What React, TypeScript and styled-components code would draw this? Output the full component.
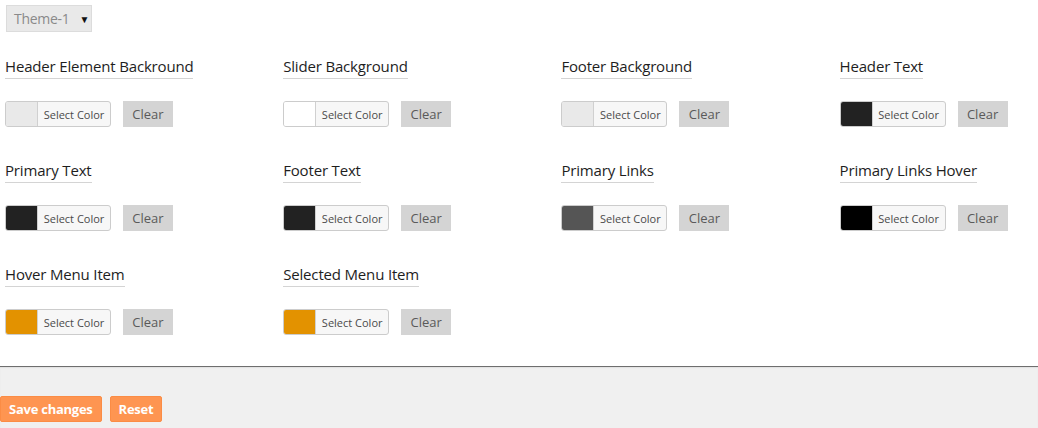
import React from 'react';
import styled, { createGlobalStyle } from 'styled-components';

const GlobalStyle = createGlobalStyle`
  html, body {
    margin: 0;
    padding: 0;
    background: #ffffff;
    font-family: "Open Sans", "Noto Sans", Arial, sans-serif;
  }
`;

type Field = { label: string; color: string };

const fields: Field[] = [
  { label: 'Header Element Backround', color: '#e9e9e9' },
  { label: 'Slider Background', color: '#ffffff' },
  { label: 'Footer Background', color: '#e9e9e9' },
  { label: 'Header Text', color: '#222222' },
  { label: 'Primary Text', color: '#222222' },
  { label: 'Footer Text', color: '#222222' },
  { label: 'Primary Links', color: '#555555' },
  { label: 'Primary Links Hover', color: '#000000' },
  { label: 'Hover Menu Item', color: '#e39200' },
  { label: 'Selected Menu Item', color: '#e39200' },
];

const App: React.FC = () => (
  <>
    <GlobalStyle />
    <Page>
      <ThemeSelect>
        <span>Theme-1</span>
        <Arrow>▼</Arrow>
      </ThemeSelect>
      <Grid>
        {fields.map((f) => (
          <Cell key={f.label}>
            <Label>{f.label}</Label>
            <Controls>
              <Picker>
                <Swatch $color={f.color} />
                <PickerText>Select Color</PickerText>
              </Picker>
              <ClearButton>Clear</ClearButton>
            </Controls>
          </Cell>
        ))}
      </Grid>
    </Page>
    <Footer>
      <OrangeButton>Save changes</OrangeButton>
      <OrangeButton>Reset</OrangeButton>
    </Footer>
  </>
);

const Page = styled.div`
  padding: 5px 5px 31px 5px;
  border-bottom: 1px solid #6e6e6e;
  overflow: hidden;
`;

const ThemeSelect = styled.div`
  display: flex;
  align-items: center;
  box-sizing: border-box;
  margin-left: 1px;
  width: 86px;
  height: 27px;
  padding: 0 0 0 7px;
  background: #e9e9e9;
  border: 1px solid #dcdcdc;
  font-size: 14px;
  letter-spacing: -0.3px;
  white-space: nowrap;
  color: #8a8a8a;
`;

const Arrow = styled.span`
  margin-left: 10px;
  font-size: 10px;
  color: #111111;
`;

const Grid = styled.div`
  display: grid;
  grid-template-columns: repeat(4, 278.2px);
  row-gap: 33px;
  margin-top: 24px;
`;

const Cell = styled.div`
  display: flex;
  flex-direction: column;
  align-items: flex-start;
`;

const Label = styled.div`
  display: inline-block;
  font-size: 15px;
  line-height: 20px;
  letter-spacing: -0.17px;
  padding-bottom: 2px;
  color: #1e1e1e;
  border-bottom: 1px solid #d4d4d4;
`;

const Controls = styled.div`
  display: flex;
  align-items: center;
  gap: 12px;
  margin-top: 22px;
`;

const Picker = styled.div`
  display: flex;
  box-sizing: border-box;
  width: 106px;
  height: 26px;
  border: 1px solid #cccccc;
  border-radius: 3px;
  overflow: hidden;
  background: #f7f7f7;
`;

const Swatch = styled.div<{ $color: string }>`
  width: 31px;
  background: ${(p) => p.$color};
  border-right: 1px solid #d0d0d0;
`;

const PickerText = styled.div`
  flex: 1;
  display: flex;
  align-items: center;
  justify-content: center;
  font-size: 11px;
  color: #4a4a4a;
`;

const ClearButton = styled.div`
  display: flex;
  align-items: center;
  justify-content: center;
  width: 50px;
  height: 26px;
  background: #d4d4d4;
  font-size: 13px;
  color: #5a5a5a;
`;

const Footer = styled.div`
  display: flex;
  gap: 8px;
  height: 61px;
  padding-top: 29px;
  box-sizing: border-box;
  background: #f0f0f0;
  box-shadow: inset 0 1px 1px #e2e2e2;
`;

const OrangeButton = styled.div`
  display: flex;
  align-items: center;
  box-sizing: border-box;
  height: 26px;
  padding: 0 8px;
  background: #fe9551;
  border: 1px solid #fb8c45;
  border-radius: 2px;
  font-size: 13px;
  letter-spacing: -0.25px;
  font-weight: 700;
  color: #ffffff;
`;

export default App;
